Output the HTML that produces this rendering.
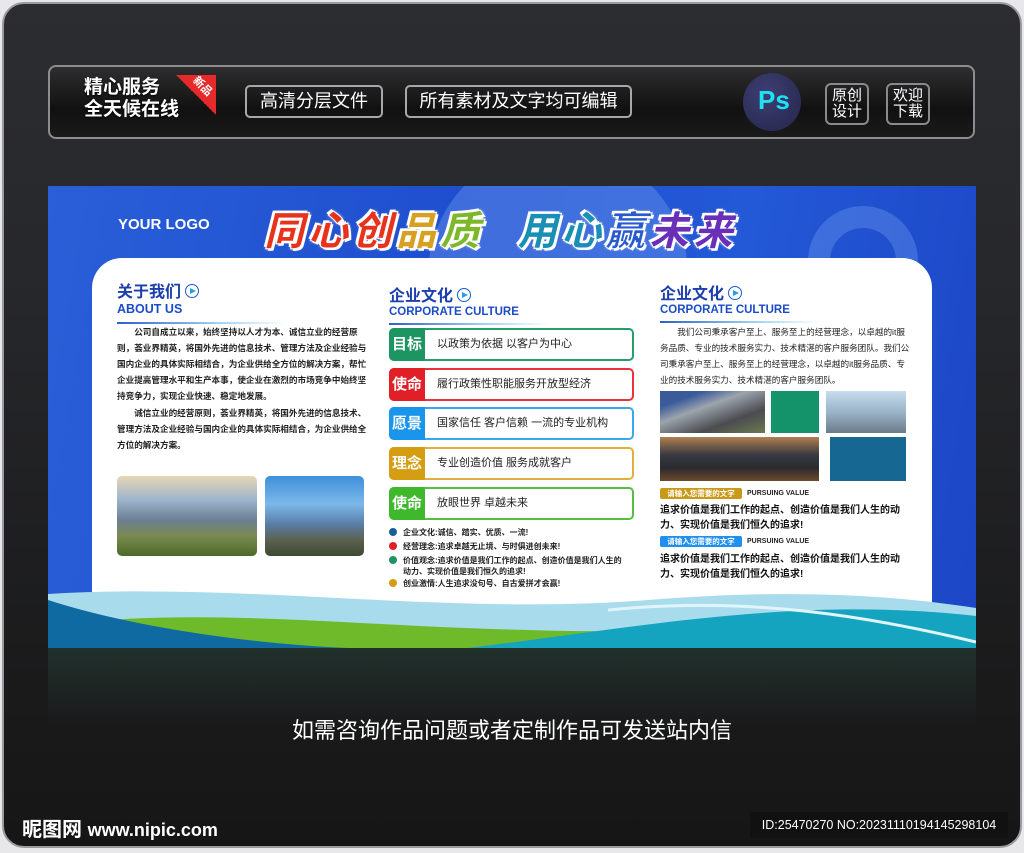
<!DOCTYPE html>
<html><head><meta charset="utf-8"><style>
*{margin:0;padding:0;box-sizing:border-box}
body{width:1024px;height:853px;background:#e8e8ea;position:relative;overflow:hidden;font-family:"Liberation Sans","Noto Sans CJK SC",sans-serif}
.frame{position:absolute;left:2px;top:2px;width:1020px;height:846px;border-radius:22px;border:2px solid #9a9aa0;background:linear-gradient(#2c2d31 0,#26272a 300px,#1b1b1c 650px,#161616 100%);overflow:hidden}
.bar{position:absolute;left:44px;top:61px;width:927px;height:74px;border:2px solid #8d8d90;border-radius:8px;background:linear-gradient(#2e2e30,#111 60%,#1a1a1a)}
.abs{position:absolute}
.btn{position:absolute;border:2px solid #a8a8aa;border-radius:5px;color:#fff;font-size:18px;line-height:28px;text-align:center}
.sq{position:absolute;border:2px solid #8a8a8c;border-radius:6px;color:#fff;font-size:15px;line-height:16px;text-align:center;padding-top:3px;width:44px;height:42px}
.poster{position:absolute;left:48px;top:186px;width:928px;height:462px;background:linear-gradient(100deg,#2a5fd8,#1f4fcf 40%,#2358d6 70%,#1c46c6);overflow:hidden}
.card{position:absolute;left:44px;top:72px;width:840px;height:360px;background:#fff;border-radius:30px 30px 0 0}
.h{color:#1b3fae;font-weight:bold;font-size:16px}
.en{color:#1b4cc8;font-size:12.5px;font-weight:bold}
.play{display:inline-block;width:14px;height:14px;border:1.5px solid #1a5cd0;border-radius:50%;vertical-align:-1px;margin-left:4px;position:relative}
.play:after{content:"";position:absolute;left:4px;top:2.5px;border-left:6px solid #22a0e0;border-top:3.5px solid transparent;border-bottom:3.5px solid transparent}
.ul{height:2px;background:linear-gradient(90deg,#2d5fd0,#9fd4f2 60%,rgba(255,255,255,0))}
.p{font-size:8.6px;line-height:16px;color:#222;font-weight:bold}
.row{position:absolute;left:297px;width:245px;height:33px;border:2px solid;border-radius:5px;background:#fff}
.row b{position:absolute;left:-2px;top:-2px;width:36px;height:33px;border-radius:5px 0 0 5px;color:#fff;font-size:15px;line-height:33px;text-align:center}
.row span{position:absolute;left:46px;top:0;font-size:11px;line-height:29px;color:#222}
.li{position:absolute;left:297px;font-size:8px;color:#222;font-weight:bold;line-height:11px}
.li i{display:inline-block;width:8px;height:8px;border-radius:50%;margin-right:6px;vertical-align:-1px}
</style></head><body>
<div class="frame">
<div class="bar">
 <div class="abs" style="left:34px;top:10px;color:#fff;font-weight:bold;font-size:19px;line-height:22px;text-shadow:0 1px 2px #000">精心服务<br>全天候在线</div>
 <div class="abs" style="left:126px;top:8px;width:40px;height:40px;background:linear-gradient(225deg,#e62a2a 50%,transparent 50%)"></div>
 <div class="abs" style="left:142px;top:11px;color:#fff;font-size:11px;font-weight:bold;transform:rotate(45deg)">新品</div>
 <div class="btn" style="left:195px;top:18px;width:138px;height:33px">高清分层文件</div>
 <div class="btn" style="left:355px;top:18px;width:227px;height:33px">所有素材及文字均可编辑</div>
 <div class="abs" style="left:693px;top:6px;width:58px;height:58px;border-radius:50%;background:radial-gradient(circle at 40% 35%,#3d3f72,#24254a)"></div>
 <div class="abs" style="left:708px;top:18px;color:#1ee1f4;font-weight:bold;font-size:26px">Ps</div>
 <div class="sq" style="left:775px;top:16px">原创<br>设计</div>
 <div class="sq" style="left:836px;top:16px">欢迎<br>下载</div>
</div>
</div>
<div class="poster">
 <div class="abs" style="left:380px;top:-40px;width:260px;height:260px;border-radius:50%;background:rgba(160,200,255,.25)"></div>
 <div class="abs" style="left:760px;top:20px;width:110px;height:110px;border-radius:50%;border:22px solid rgba(150,190,255,.25)"></div>
 <div class="abs" style="left:70px;top:30px;color:#fff;font-weight:bold;font-size:15px">YOUR LOGO</div>
 <div class="abs" style="left:216px;top:13px;font-size:40px;font-weight:900;font-style:italic;letter-spacing:4px;-webkit-text-stroke:1px #fff;text-shadow:0 0 3px #fff,2px 2px 0 #fff,-2px -2px 0 #fff;white-space:nowrap">
  <span style="color:#e8331c">同心创</span><span style="color:#d8a020">品</span><span style="color:#7cb82a">质</span>
  <span style="margin-left:18px;color:#1a8fb5">用心</span><span style="color:#2a5ad0">赢</span><span style="color:#6a2fb8">未来</span></div>
 <div class="card">
  <div class="abs" style="left:25px;top:20px"><div class="h">关于我们<span class="play"></span></div><div class="en">ABOUT US</div><div class="ul" style="width:170px;margin-top:6px"></div></div>
  <div class="abs p" style="left:25px;top:66px;width:250px;text-indent:2em">公司自成立以来，始终坚持以人才为本、诚信立业的经营原则，荟业界精英，将国外先进的信息技术、管理方法及企业经验与国内企业的具体实际相结合，为企业供给全方位的解决方案，帮忙企业提高管理水平和生产本事，使企业在激烈的市场竞争中始终坚持竞争力，实现企业快速、稳定地发展。</div>
  <div class="abs p" style="left:25px;top:147px;width:250px;text-indent:2em">诚信立业的经营原则，荟业界精英，将国外先进的信息技术、管理方法及企业经验与国内企业的具体实际相结合，为企业供给全方位的解决方案。</div>
  <div class="abs" style="left:25px;top:218px;width:140px;height:80px;border-radius:5px;background:linear-gradient(#e8d6b4,#9bb4cc 30%,#6c7f95 55%,#7a8a50 75%,#4c6a2a)"></div>
  <div class="abs" style="left:173px;top:218px;width:99px;height:80px;border-radius:5px;background:linear-gradient(#3f8fdc,#7cb8e8 35%,#5a7ea8 60%,#5b6150 80%,#3d4a30)"></div>
  <div class="abs" style="left:297px;top:24px"><div class="h">企业文化<span class="play"></span></div><div class="en" style="font-size:11.5px">CORPORATE CULTURE</div><div class="ul" style="width:160px;margin-top:5px"></div></div>
  <div class="row" style="top:70px;border-color:#23a06a"><b style="background:#1c9563">目标</b><span>以政策为依据 以客户为中心</span></div>
  <div class="row" style="top:110px;border-color:#e8323c"><b style="background:#e01f27">使命</b><span>履行政策性职能服务开放型经济</span></div>
  <div class="row" style="top:149px;border-color:#38a8ec"><b style="background:#1a95ec">愿景</b><span>国家信任 客户信赖 一流的专业机构</span></div>
  <div class="row" style="top:189px;border-color:#e0b03a"><b style="background:#d49d12">理念</b><span>专业创造价值 服务成就客户</span></div>
  <div class="row" style="top:229px;border-color:#55c040"><b style="background:#3fb82c">使命</b><span>放眼世界 卓越未来</span></div>
  <div class="li" style="top:269px"><i style="background:#1a5e96"></i>企业文化:诚信、踏实、优质、一流!</div>
  <div class="li" style="top:283px"><i style="background:#e01f27"></i>经营理念:追求卓越无止境、与时俱进创未来!</div>
  <div class="li" style="top:297px;width:240px;padding-left:14px;text-indent:-14px"><i style="background:#1c9563"></i>价值观念:追求价值是我们工作的起点、创造价值是我们人生的动力、实现价值是我们恒久的追求!</div>
  <div class="li" style="top:320px"><i style="background:#d49d12"></i>创业激情:人生追求没句号、自古爱拼才会赢!</div>
  <div class="abs" style="left:568px;top:22px"><div class="h">企业文化<span class="play"></span></div><div class="en" style="font-size:11.5px">CORPORATE CULTURE</div><div class="ul" style="width:160px;margin-top:5px"></div></div>
  <div class="abs" style="left:568px;top:66px;width:250px;font-size:8.6px;line-height:16px;color:#222;text-indent:2em">我们公司秉承客户至上、服务至上的经营理念，以卓越的it服务品质、专业的技术服务实力、技术精湛的客户服务团队。我们公司秉承客户至上、服务至上的经营理念，以卓越的it服务品质、专业的技术服务实力、技术精湛的客户服务团队。</div>
  <div class="abs" style="left:568px;top:133px;width:105px;height:42px;background:linear-gradient(160deg,#3a5a9a 20%,#9ca4ac 40%,#4a4c50 70%,#6a7a50)"></div>
  <div class="abs" style="left:679px;top:133px;width:48px;height:42px;background:#14936a"></div>
  <div class="abs" style="left:734px;top:133px;width:80px;height:42px;background:linear-gradient(#c8dcec,#9ab4c8 50%,#6c7a8a)"></div>
  <div class="abs" style="left:568px;top:179px;width:159px;height:44px;background:linear-gradient(#b08050,#3a3a44 40%,#2a2a30 70%,#6a4a2a)"></div>
  <div class="abs" style="left:738px;top:179px;width:76px;height:44px;background:#176793"></div>
  <div class="abs" style="left:568px;top:230px;width:82px;height:11px;background:#c99a1a;border-radius:2px;color:#fff;font-size:7.5px;line-height:11px;text-align:center;font-weight:bold">请输入您需要的文字</div>
  <div class="abs" style="left:655px;top:230px;font-size:7px;line-height:11px;color:#222;font-weight:bold">PURSUING VALUE</div>
  <div class="abs" style="left:568px;top:245px;width:250px;font-size:10px;line-height:15px;color:#111;font-weight:bold">追求价值是我们工作的起点、创造价值是我们人生的动力、实现价值是我们恒久的追求!</div>
  <div class="abs" style="left:568px;top:278px;width:82px;height:11px;background:#1f8ff0;border-radius:2px;color:#fff;font-size:7.5px;line-height:11px;text-align:center;font-weight:bold">请输入您需要的文字</div>
  <div class="abs" style="left:655px;top:278px;font-size:7px;line-height:11px;color:#222;font-weight:bold">PURSUING VALUE</div>
  <div class="abs" style="left:568px;top:294px;width:250px;font-size:10px;line-height:15px;color:#111;font-weight:bold">追求价值是我们工作的起点、创造价值是我们人生的动力、实现价值是我们恒久的追求!</div>
 </div>
 <svg class="abs" style="left:0;top:400px" width="928" height="62" viewBox="0 0 928 62">
  <path d="M0 8 C200 -4 400 30 600 14 C750 2 850 10 928 22 V62 H0Z" fill="#a8dcec"/>
  <path d="M0 40 C150 20 300 40 480 44 C650 50 800 30 928 40 V62 H0Z" fill="#6fba2a"/>
  <path d="M0 14 C80 40 200 58 300 62 L0 62Z" fill="#0e6aa0"/>
  <path d="M420 62 C600 40 750 10 928 30 V62Z" fill="#14a4c0"/>
  <path d="M560 24 C700 10 820 30 928 56" stroke="#e0f4fa" stroke-width="3" fill="none"/>
 </svg>
</div>
<div class="abs" style="left:48px;top:648px;width:928px;height:80px;background:linear-gradient(rgba(40,70,60,.5),rgba(20,20,22,0))"></div>
<div class="abs" style="left:0;top:713px;width:1024px;text-align:center;color:#fff;font-size:22px">如需咨询作品问题或者定制作品可发送站内信</div>
<div class="abs" style="left:22px;top:813px;color:#fff;font-size:20px;font-weight:bold">昵图网 <span style="font-size:18px">www.nipic.com</span></div>
<div class="abs" style="left:750px;top:812px;width:258px;height:26px;background:#111;color:#fff;font-size:12.5px;line-height:26px;text-align:center">ID:25470270 NO:20231110194145298104</div>
</body></html>
